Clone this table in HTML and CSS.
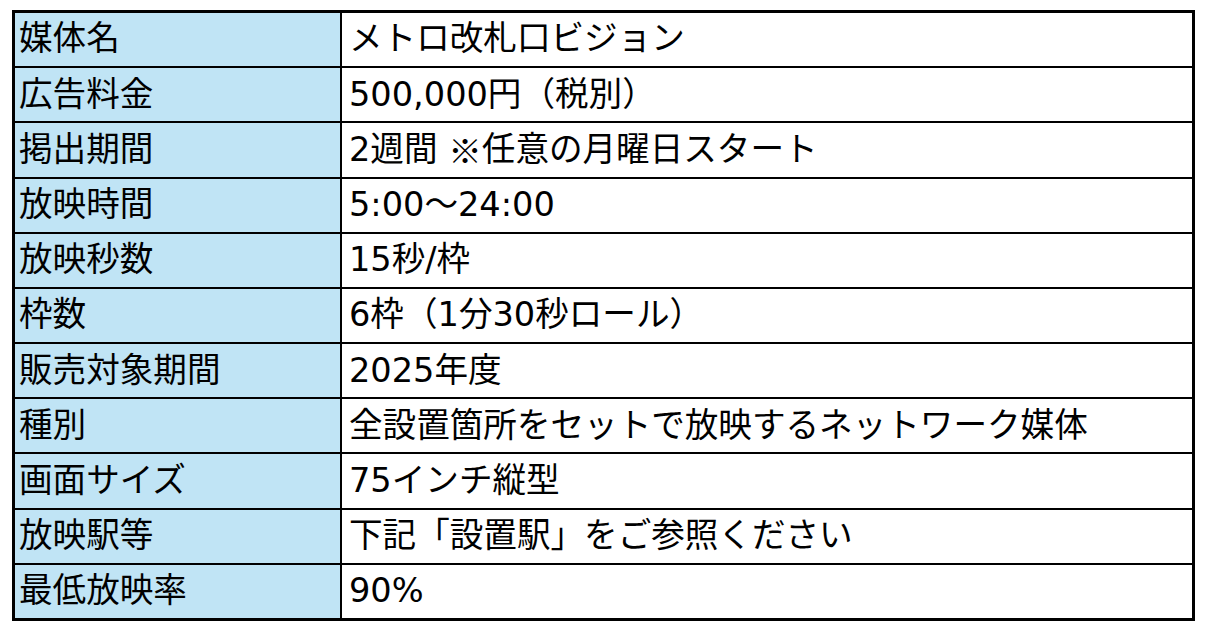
FILE: index.html
```html
<!DOCTYPE html>
<html lang="ja">
<head>
<meta charset="utf-8">
<title>メトロ改札口ビジョン</title>
<link rel="stylesheet" href="styles.css">
</head>
<body>
<div class="spec">
  <div class="key">媒体名</div><div class="val">メトロ改札口ビジョン</div>
  <div class="key">広告料金</div><div class="val">500,000円（税別）</div>
  <div class="key">掲出期間</div><div class="val">2週間 <span class="cjk">※</span>任意の月曜日スタート</div>
  <div class="key">放映時間</div><div class="val">5:00～24:00</div>
  <div class="key">放映秒数</div><div class="val">15秒/枠</div>
  <div class="key">枠数</div><div class="val">6枠（1分30秒ロール）</div>
  <div class="key">販売対象期間</div><div class="val">2025年度</div>
  <div class="key">種別</div><div class="val">全設置箇所をセットで放映するネットワーク媒体</div>
  <div class="key">画面サイズ</div><div class="val">75インチ縦型</div>
  <div class="key">放映駅等</div><div class="val">下記「設置駅」をご参照ください</div>
  <div class="key">最低放映率</div><div class="val">90%</div>
</div>
</body>
</html>
```
FILE: styles.css
```css
html, body {
  margin: 0;
  padding: 0;
  background: #ffffff;
}
body {
  padding: 10px 0 0 12px;
}
.spec {
  box-sizing: border-box;
  width: 1183px;
  height: 611px;
  border: 3px solid #000;
  background: #000;
  display: grid;
  grid-template-columns: 325px 850px;
  grid-template-rows: repeat(11, 1fr);
  gap: 2px;
  font-family: "DejaVu Sans", "Noto Sans CJK JP", sans-serif;
  font-size: 33.6px;
  line-height: 1.2;
  color: #000;
}
.key, .val {
  display: flex;
  align-items: center;
  white-space: pre;
}
.key {
  background: #c0e4f5;
  padding-left: 4px;
}
.val {
  background: #ffffff;
  padding-left: 7px;
}
.cjk {
  font-family: "Noto Sans CJK JP", sans-serif;
}
```
